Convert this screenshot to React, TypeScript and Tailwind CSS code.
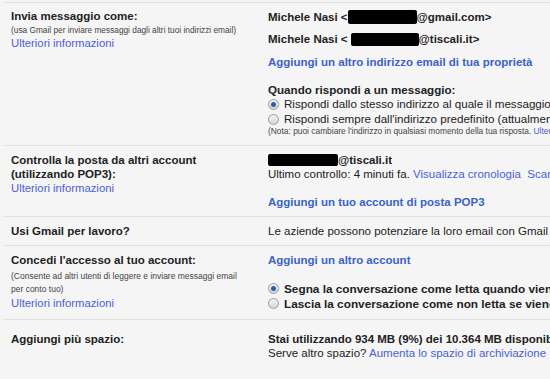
import React from "react";

const link = "text-[#4b5fd4]";
const boldLink = "font-bold text-[#3c62c9]";

function Redacted({ w, h = 14, className = "" }: { w: number; h?: number; className?: string }) {
  return <span className={`inline-block rounded-[2px] bg-black align-middle ${className}`} style={{ width: w, height: h }} />;
}

function Radio({ checked }: { checked?: boolean }) {
  return (
    <span className="mr-[5px] inline-flex h-[11px] w-[11px] shrink-0 items-center justify-center rounded-full border border-[#9a9a9a] bg-gradient-to-b from-[#f6f6f6] to-[#d6d6d6]">
      {checked && <span className="h-[5px] w-[5px] rounded-full bg-[#2b5ea8]" />}
    </span>
  );
}

function Row({ left, right, className = "" }: { left: React.ReactNode; right: React.ReactNode; className?: string }) {
  return (
    <div className={`ml-[3px] flex border-b border-[#e1e1e1] ${className}`}>
      <div className="w-[265px] shrink-0 pl-[8px]">{left}</div>
      <div className="min-w-0 flex-1 whitespace-nowrap">{right}</div>
    </div>
  );
}

export default function App() {
  return (
    <div
      className="h-[379px] w-[550px] overflow-hidden bg-[#f5f5f5] pt-[2px] text-[11.5px] leading-[14px] text-[#222]"
      style={{ fontFamily: '"Liberation Sans", Arial, sans-serif' }}
    >
      <div className="ml-[3px] border-t border-[#e1e1e1]" />

      <Row
        className="h-[143px]"
        left={
          <div className="pt-[6px]">
            <div className="h-[15px] leading-[15px] font-bold">Invia messaggio come:</div>
            <div className="h-[12px] text-[8.3px] leading-[12px] text-[#444]">(usa Gmail per inviare messaggi dagli altri tuoi indirizzi email)</div>
            <div className={`h-[15px] text-[11.3px] leading-[15px] ${link}`}>Ulteriori informazioni</div>
          </div>
        }
        right={
          <div className="pt-[6px]">
            <div className="flex h-[16px] items-center font-bold">Michele Nasi &lt;<Redacted w={69} />@gmail.com&gt;</div>
            <div className="mt-[6px] flex h-[16px] items-center font-bold">Michele Nasi &lt;<Redacted w={68} h={13} className="ml-[3px]" />@tiscali.it&gt;</div>
            <div className={`mt-[7px] h-[16px] leading-[16px] ${boldLink}`}>Aggiungi un altro indirizzo email di tua proprietà</div>
            <div className="mt-[12px] h-[15px] text-[11.6px] leading-[15px] font-bold">Quando rispondi a un messaggio:</div>
            <div className="flex h-[14px] items-center text-[11.6px]">
              <Radio checked />
              Rispondi dallo stesso indirizzo al quale il messaggio è stato inviato
            </div>
            <div className="mt-[1px] flex h-[14px] items-center text-[11.6px]">
              <Radio />
              Rispondi sempre dall'indirizzo predefinito (attualmente Michele Nasi)
            </div>
            <div className="h-[11px] text-[8.4px] leading-[11px] text-[#444]">
              (Nota: puoi cambiare l'indirizzo in qualsiasi momento della tua risposta. <span className={link}>Ulteriori informazioni</span>)
            </div>
          </div>
        }
      />

      <Row
        className="h-[71px]"
        left={
          <div className="pt-[7px]">
            <div className="font-bold">Controlla la posta da altri account</div>
            <div className="font-bold">(utilizzando POP3):</div>
            <div className={`text-[11.3px] ${link}`}>Ulteriori informazioni</div>
          </div>
        }
        right={
          <div className="pt-[7px]">
            <div className="flex h-[14px] items-center font-bold"><Redacted w={70} h={12} />@tiscali.it</div>
            <div>
              Ultimo controllo: 4 minuti fa. <span className={link}>Visualizza cronologia</span>&nbsp;&nbsp;<span className={link}>Scarica la posta ora</span>
            </div>
            <div className={`mt-[14px] ${boldLink}`}>Aggiungi un tuo account di posta POP3</div>
          </div>
        }
      />

      <Row
        className="h-[29px]"
        left={<div className="pt-[7px] font-bold">Usi Gmail per lavoro?</div>}
        right={<div className="pt-[7px]">Le aziende possono potenziare la loro email con Gmail for Work</div>}
      />

      <Row
        className="h-[74px]"
        left={
          <div className="pt-[7px]">
            <div className="font-bold">Concedi l'accesso al tuo account:</div>
            <div className="mt-[3px] w-[240px] text-[8.5px] leading-[13px] text-[#444]">(Consente ad altri utenti di leggere e inviare messaggi email per conto tuo)</div>
            <div className={`text-[11.3px] ${link}`}>Ulteriori informazioni</div>
          </div>
        }
        right={
          <div className="pt-[7px]">
            <div className={boldLink}>Aggiungi un altro account</div>
            <div className="mt-[14px] flex h-[15px] items-center text-[11.8px] font-bold">
              <Radio checked />
              Segna la conversazione come letta quando viene aperta da altri
            </div>
            <div className="flex h-[15px] items-center text-[11.8px] font-bold">
              <Radio />
              Lascia la conversazione come non letta se viene aperta da altri
            </div>
          </div>
        }
      />

      <Row
        className="h-[60px] border-b-0"
        left={<div className="pt-[12px] font-bold">Aggiungi più spazio:</div>}
        right={
          <div className="pt-[12px]">
            <div className="font-bold">Stai utilizzando 934 MB (9%) dei 10.364 MB disponibili</div>
            <div>
              Serve altro spazio? <span className={link}>Aumenta lo spazio di archiviazione</span>
            </div>
          </div>
        }
      />
    </div>
  );
}
